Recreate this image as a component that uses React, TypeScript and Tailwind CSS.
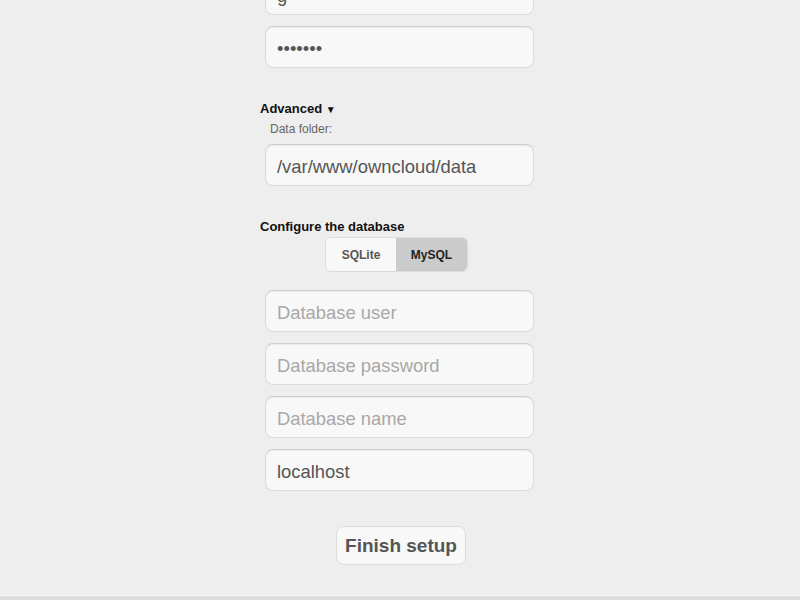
import { ReactElement } from 'react'

const inputCls =
  'mx-[5px] h-[42px] w-[269px] shrink-0 rounded-lg border border-[#dcdcdc] border-t-[#cfcfcf] bg-[#f8f8f8] pl-[11px] pr-2 pt-[3px] text-[18.4px] text-[#555] placeholder:text-[#a8a8a8] shadow-[inset_0_1px_1px_rgba(0,0,0,0.06)] outline-none'

function Field({ value, placeholder, type = 'text', className = '' }: { value?: string; placeholder?: string; type?: string; className?: string }): ReactElement {
  return (
    <input
      type={type}
      readOnly
      value={value ?? ''}
      placeholder={placeholder}
      className={`${inputCls} ${className}`}
    />
  )
}

export default function App(): ReactElement {
  return (
    <div
      className="flex min-h-[600px] flex-col overflow-hidden bg-[#eeeeee]"
      style={{ fontFamily: '"Liberation Sans", Arial, sans-serif' }}
    >
      <div className="mx-auto flex w-[280px] flex-col">
        <Field value="g" className="mt-[-27px]" />
        <Field value="1234567" type="password" className="mt-[11px]" />

        <div className="mt-[33px] h-[16px] text-[13px] leading-[16px] font-bold text-[#111]">
          Advanced <span className="text-[10px]">▼</span>
        </div>
        <div className="mt-[5px] ml-[10px] h-[15px] text-[12px] leading-[15px] text-[#666]">Data folder:</div>
        <Field value="/var/www/owncloud/data" className="mt-[7px]" />

        <div className="mt-[33px] h-[16px] text-[13px] leading-[16px] font-bold text-[#111]">
          Configure the database
        </div>
        <div className="mt-[2px] ml-[65px] flex h-[35px] w-[143px] overflow-hidden rounded-md border border-[#dcdcdc] text-[12px] font-bold">
          <div className="flex w-[70px] items-center justify-center bg-[#f8f8f8] text-[#555]">SQLite</div>
          <div className="flex flex-1 items-center justify-center bg-[#cbcbcb] text-[#222]">MySQL</div>
        </div>

        <Field placeholder="Database user" className="mt-[18px]" />
        <Field placeholder="Database password" className="mt-[11px]" />
        <Field placeholder="Database name" className="mt-[11px]" />
        <Field value="localhost" className="mt-[11px]" />

        <button className="mt-[35px] ml-[76px] h-[39px] w-[130px] rounded-lg border border-[#dcdcdc] bg-[#f8f8f8] pt-[1px] text-[19px] font-bold text-[#555]">
          Finish setup
        </button>
      </div>
      <div className="mt-auto h-[5px] shrink-0 border-t border-[#fafafa] bg-[#dddddd]" />
    </div>
  )
}
